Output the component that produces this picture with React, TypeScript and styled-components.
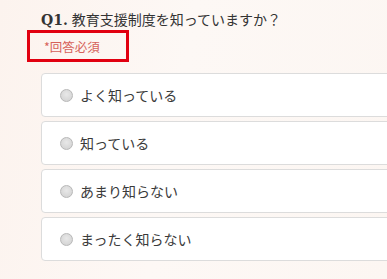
import React from 'react'
import styled, { createGlobalStyle } from 'styled-components'

const GlobalStyle = createGlobalStyle`
  html, body {
    margin: 0;
    padding: 0;
  }
  body {
    width: 387px;
    height: 279px;
    overflow: hidden;
    background: linear-gradient(100deg, #fcf3ee 0%, #fdf8f5 45%, #fcf6f2 100%);
    font-family: "Liberation Sans", "Noto Sans CJK JP", sans-serif;
  }
`

const Page = styled.div`
  width: 387px;
  height: 279px;
  overflow: hidden;
  box-sizing: border-box;
  padding: 9px 0 0 41px;
`

const Title = styled.h2`
  margin: 0;
  font-size: 14px;
  font-weight: normal;
  color: #333;
  line-height: 20px;
  font-family: "Noto Sans CJK JP", sans-serif;
`

const Num = styled.span`
  font-family: "DejaVu Serif", "Liberation Serif", serif;
  font-weight: bold;
  font-size: 14px;
  color: #333;
  margin-right: 4px;
`

const Required = styled.div`
  width: 96px;
  height: 26px;
  margin: 0 0 0 -14px;
  border: 3px solid #e10010;
  display: flex;
  align-items: center;
`

const RequiredText = styled.span`
  margin-left: 14px;
  font-size: 12.5px;
  color: #d6615a;
  font-family: "Noto Sans CJK JP", sans-serif;
`

const List = styled.div`
  margin-top: 11px;
  display: flex;
  flex-direction: column;
  gap: 4px;
`

const Option = styled.label`
  display: flex;
  align-items: center;
  height: 42px;
  width: 380px;
  background: #fff;
  border: 1px solid #dcdcdc;
  border-radius: 4px;
  padding-left: 18px;
  cursor: pointer;
`

const Radio = styled.span`
  width: 11px;
  height: 11px;
  border-radius: 50%;
  border: 1px solid #b8b8b8;
  background: radial-gradient(circle at 50% 40%, #e8e8e8 0%, #cfcfcf 100%);
  margin-right: 7px;
  flex-shrink: 0;
`

const OptionText = styled.span`
  font-size: 14px;
  color: #3a3a3a;
  font-family: "Noto Sans CJK JP", sans-serif;
`

const options = ['よく知っている', '知っている', 'あまり知らない', 'まったく知らない']

export default function App() {
  return (
    <>
      <GlobalStyle />
      <Page>
        <Title>
          <Num>Q1.</Num>教育支援制度を知っていますか？
        </Title>
        <Required>
          <RequiredText>*回答必須</RequiredText>
        </Required>
        <List>
          {options.map((o) => (
            <Option key={o}>
              <Radio />
              <OptionText>{o}</OptionText>
            </Option>
          ))}
        </List>
      </Page>
    </>
  )
}
